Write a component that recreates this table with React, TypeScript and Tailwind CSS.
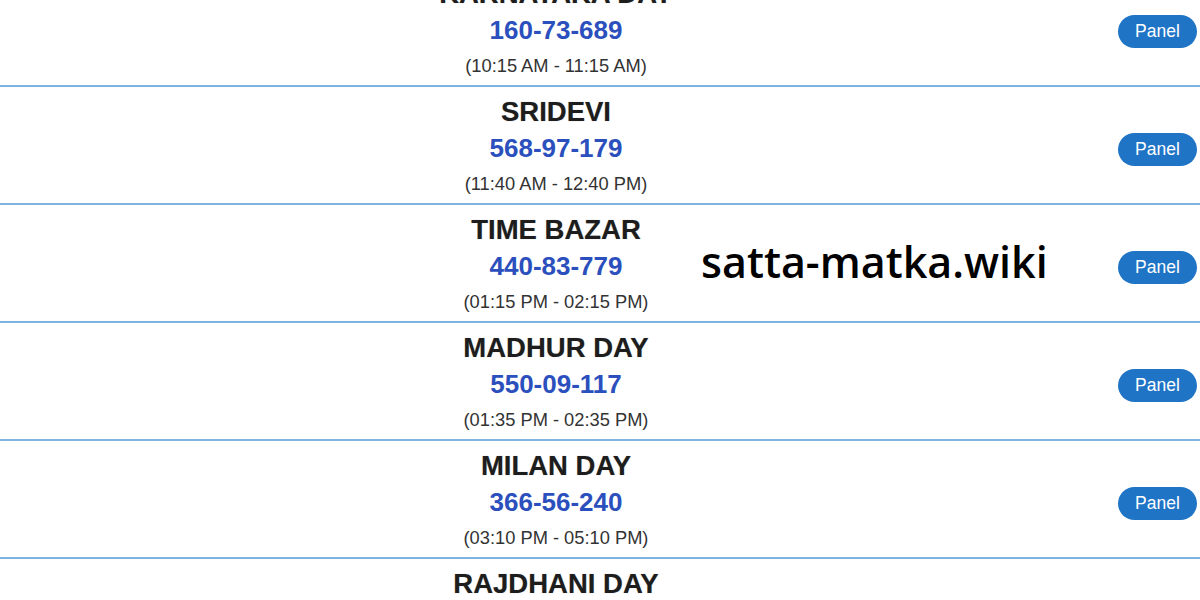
const markets = [
  { name: "KARNATAKA DAY", result: "160-73-689", time: "(10:15 AM - 11:15 AM)" },
  { name: "SRIDEVI", result: "568-97-179", time: "(11:40 AM - 12:40 PM)" },
  { name: "TIME BAZAR", result: "440-83-779", time: "(01:15 PM - 02:15 PM)" },
  { name: "MADHUR DAY", result: "550-09-117", time: "(01:35 PM - 02:35 PM)" },
  { name: "MILAN DAY", result: "366-56-240", time: "(03:10 PM - 05:10 PM)" },
  { name: "RAJDHANI DAY", result: "", time: "" },
];

function MarketRow({ name, result, time }: { name: string; result: string; time: string }) {
  return (
    <div className="grid h-[118px] grid-cols-[1112px_1fr] border-b-2 border-[#80b3df] pt-[7px]">
      <div className="flex flex-col items-center text-center">
        <div className="text-[27.5px] font-bold leading-[36px] text-[#1d1d1d] [text-shadow:0_0_1px_rgba(0,0,0,0.35)]">
          {name}
        </div>
        <div className="text-[26px] font-bold leading-[36px] text-[#2b50bd]">{result}</div>
        <div className="text-[18.3px] leading-[35px] text-[#333]">{time}</div>
      </div>
      <div className="flex items-start justify-end pr-[3px] pt-[39px]">
        {result && (
          <button className="h-[33px] w-[79px] rounded-full bg-[#1f74c6] text-[17.5px] leading-none text-white">
            Panel
          </button>
        )}
      </div>
    </div>
  );
}

export default function App() {
  return (
    <div className="relative h-[600px] w-[1200px] overflow-hidden bg-white font-['Liberation_Sans',Arial,sans-serif]">
      <div className="-mt-[31px]">
        {markets.map((m) => (
          <MarketRow key={m.name} {...m} />
        ))}
      </div>
      <div className="absolute left-[701px] top-[234px] font-['Open_Sans',sans-serif] text-[43px] font-semibold leading-[56px] text-black">
        satta-matka.wiki
      </div>
    </div>
  );
}
